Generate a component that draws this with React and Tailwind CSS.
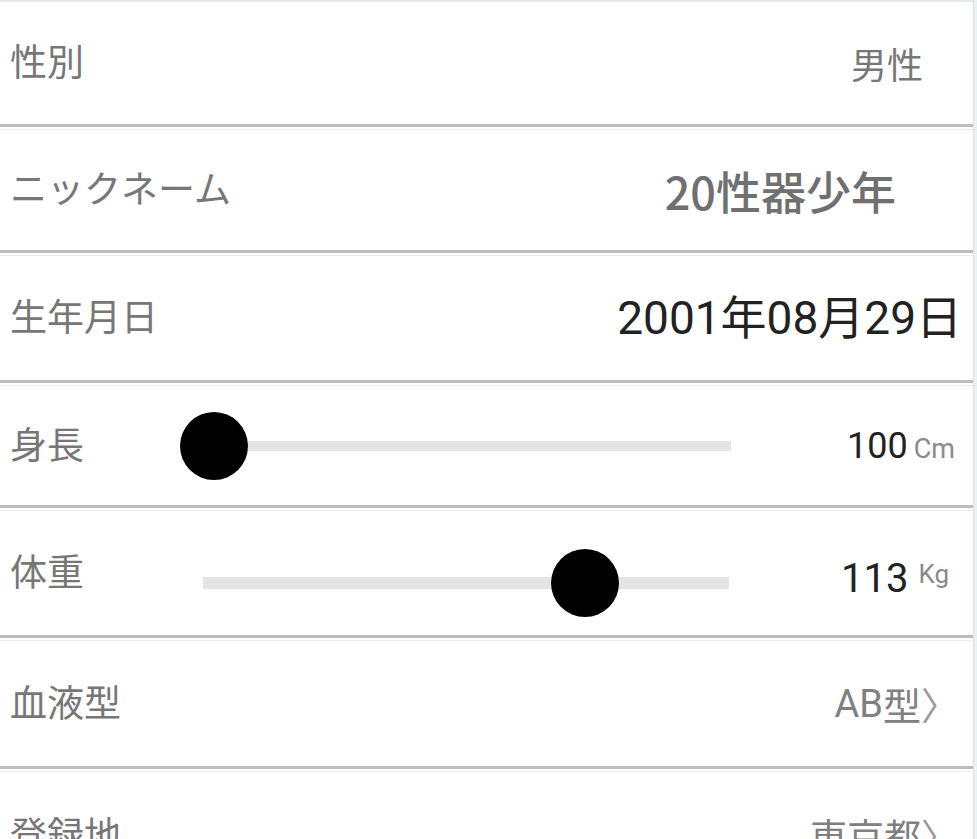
import React from "react";

const cjk = "font-['Noto_Sans_CJK_JP','Noto_Sans',sans-serif]";
const num = "font-['Roboto','Noto_Sans_CJK_JP',sans-serif]";

function Label({ children }) {
  return (
    <span className={`${cjk} text-[37px] leading-none text-[#777777] whitespace-nowrap -mt-[5px]`}>
      {children}
    </span>
  );
}

function Slider({ box, track, thumb }) {
  return (
    <div className={`relative h-[72px] ${box}`}>
      <div className={`absolute left-0 right-0 top-1/2 -translate-y-1/2 bg-[#e4e4e4] ${track}`} />
      <div className={`absolute top-1/2 -translate-y-1/2 w-[68px] h-[68px] rounded-full bg-black ${thumb}`} />
    </div>
  );
}

export default function App() {
  return (
    <div className="w-[977px] h-[839px] overflow-hidden bg-[#e8f2f0] flex">
      <div className="w-[974px] shrink-0 bg-white border-r border-[#d9e3e1] flex flex-col">
        {/* 性別 */}
        <div className="h-[127px] shrink-0 flex items-center justify-between pl-[10px] pr-[50px] border-t-2 border-t-[#e2e8e7] border-b-[3px] border-b-[#bdbdbd]">
          <Label>性別</Label>
          <span className={`${cjk} text-[36px] leading-none text-[#777777]`}>男性</span>
        </div>

        {/* ニックネーム */}
        <div className="h-[124px] mt-[2px] shrink-0 flex items-center justify-between pl-[10px] pr-[77px] border-t border-t-[#ebebeb] border-b-[3px] border-b-[#bdbdbd]">
          <Label>ニックネーム</Label>
          <span className={`${cjk} text-[45px] leading-none font-medium text-[#707070]`}>20性器少年</span>
        </div>

        {/* 生年月日 */}
        <div className="h-[128px] mt-[2px] shrink-0 flex items-center justify-between pl-[10px] pr-[11px] border-t border-t-[#ebebeb] border-b-[3px] border-b-[#bdbdbd]">
          <Label>生年月日</Label>
          <span className={`${num} text-[46px] leading-none text-[#222222]`}>2001年08月29日</span>
        </div>

        {/* 身長 */}
        <div className="h-[123px] mt-[2px] shrink-0 flex items-center pl-[10px] pr-[18px] border-t border-t-[#ebebeb] border-b-[3px] border-b-[#bdbdbd]">
          <div className="w-[170px] shrink-0 flex">
            <Label>身長</Label>
          </div>
          <Slider box="w-[551px]" track="h-[10px] ml-[34px]" thumb="left-0" />
          <div className="ml-auto flex items-baseline gap-[6px]">
            <span className={`${num} text-[36px] leading-none text-[#222222]`}>100</span>
            <span className={`${num} text-[27px] leading-none text-[#8a8a8a]`}>Cm</span>
          </div>
        </div>

        {/* 体重 */}
        <div className="h-[128px] mt-[2px] shrink-0 flex items-center pl-[10px] pr-[24px] border-t border-t-[#ebebeb] border-b-[3px] border-b-[#bdbdbd]">
          <div className="w-[193px] shrink-0 flex">
            <Label>体重</Label>
          </div>
          <Slider box="w-[526px] mt-[20px]" track="h-[12px]" thumb="left-[348px]" />
          <div className="ml-auto mt-[12px] flex items-start gap-[10px]">
            <span className={`${num} text-[40px] leading-none text-[#222222]`}>113</span>
            <span className={`${num} text-[26px] leading-none text-[#8a8a8a] mt-[2px]`}>Kg</span>
          </div>
        </div>

        {/* 血液型 */}
        <div className="h-[129px] mt-[2px] shrink-0 flex items-center justify-between pl-[10px] pr-[34px] border-t border-t-[#ebebeb] border-b-[3px] border-b-[#bdbdbd]">
          <Label>血液型</Label>
          <span className={`${cjk} text-[38px] leading-none text-[#808080] flex items-center`}>
            <span className={num}>AB</span>型<span className="text-[#9a9a9a] w-[18px] overflow-hidden">〉</span>
          </span>
        </div>

        {/* 登録地 */}
        <div className="h-[128px] mt-[2px] shrink-0 flex items-center justify-between pl-[10px] pr-[34px] border-t border-t-[#ebebeb]">
          <Label>登録地</Label>
          <span className={`${cjk} text-[37px] leading-none text-[#808080] flex items-center`}>
            東京都<span className="text-[#9a9a9a] w-[18px] overflow-hidden">〉</span>
          </span>
        </div>
      </div>
    </div>
  );
}
